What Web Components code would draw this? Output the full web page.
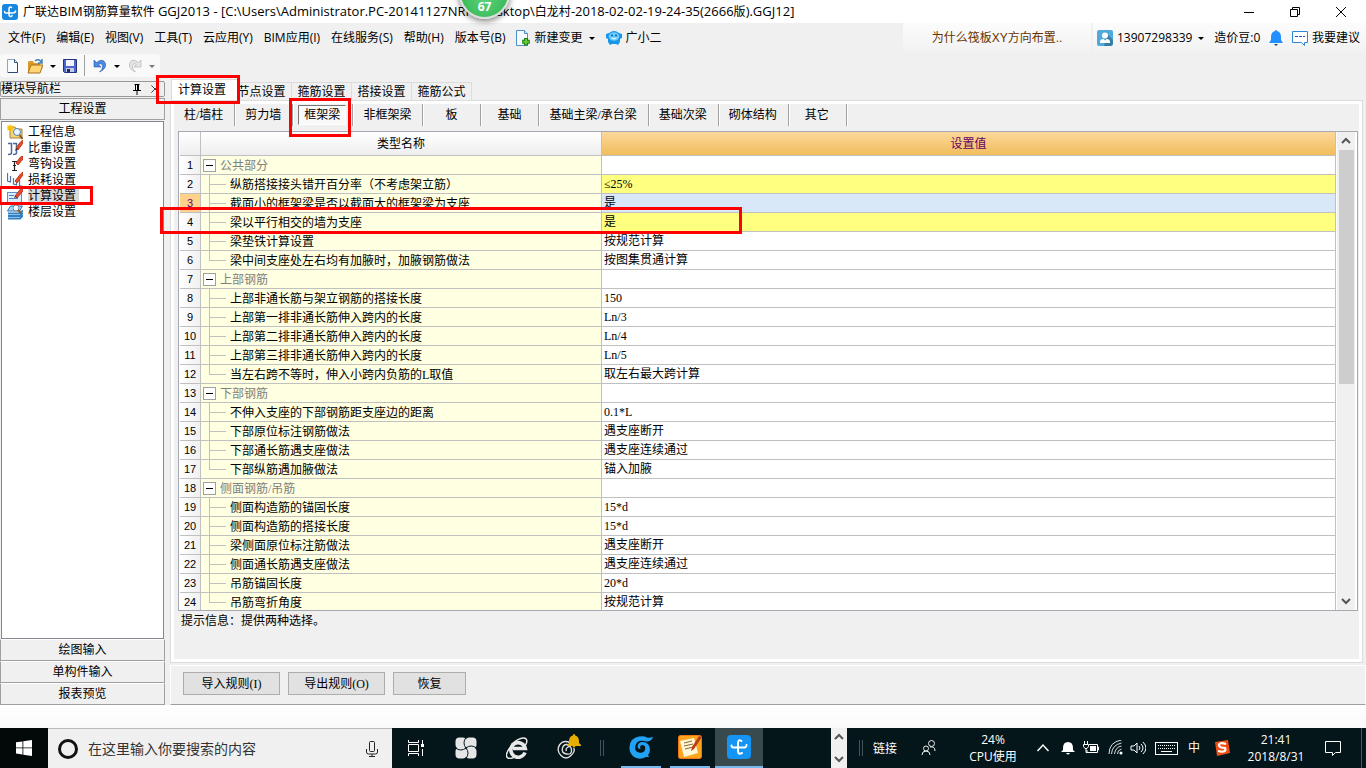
<!DOCTYPE html>
<html lang="zh-CN">
<head>
<meta charset="utf-8">
<title>广联达BIM钢筋算量软件 GGJ2013</title>
<style>
html,body{margin:0;height:100%;background:#f0f0f0}
body{font:12px/16px "Liberation Serif","Noto Sans CJK SC",serif;color:#000;overflow:hidden;
--ui:"Open Sans","Noto Sans CJK SC",sans-serif}
</style>
</head>
<body>
<budget-app></budget-app>
<script>
const ICONS = {
logo:'<rect width="16" height="16" rx="3" fill="#1787e0"/><path d="M9.500 3.500c-2-1-2.500 0-2.500 2v5c0 2.500 2.500 2.500 3 1M2.500 7.500c0 2 1.500 1.500 3 1.500h5c2.500 0 3-.5 3-2" fill="none" stroke="#fff" stroke-width="1.500" stroke-linecap="round"/>',
min:'<path d="M3 8.500h10" stroke="#000"/>',
restore:'<path d="M3.500 5.500h7v7h-7zM5.500 5.500v-2h7v7h-2" fill="none" stroke="#000"/>',
close:'<path d="M3 3l10 10M13 3L3 13" stroke="#000" fill="none"/>',
caret:'<path d="M5 7h6L8 10z" fill="#000"/>',
caretoff:'<path d="M5 7h6L8 10z" fill="#777"/>',
change:'<path d="M1.500 .5h8l3 3v12h-11z" fill="#f4faff" stroke="#4d8fc8"/><path d="M9.500 .5v3h3" fill="#cfe5f7" stroke="#4d8fc8"/><path d="M11 8v7.500M7.200 11.700h7.600" stroke="#217d12" stroke-width="4"/><path d="M11 9v5.500M8.200 11.700h5.600" stroke="#61c93a" stroke-width="2"/>',
xiaoer:'<path d="M3 3Q8-1 13 3l3 1v4l-2 1v3l-2 3-2-1H6l-2 1-2-3V9L0 8V4z" fill="#1996e8"/><ellipse cx="8" cy="6.500" rx="5.300" ry="4.200" fill="#69cbff"/><circle cx="6" cy="5.500" r="1" fill="#075ca5"/><circle cx="10" cy="5.500" r="1" fill="#075ca5"/><path d="M5.500 8q2.500 2 5 0" fill="none" stroke="#fff"/>',
user:'<rect width="16" height="16" rx="2" fill="#4fa9da"/><path d="M10 4l6 6v4l-2 2H7z" fill="#397da5"/><circle cx="8" cy="5.500" r="3" fill="#fff"/><path d="M3 12q0-3 3.500-3L8 10.500 9.500 9q3.500 0 3.500 3v1H3z" fill="#fff"/>',
bell:'<path d="M8 0q1 0 1 1 4 1 4 6v3l1.500 2v1h-13v-1L3 10V7q0-5 4-6 0-1 1-1z" fill="#2090ff"/><path d="M6 14h4l-2 2z" fill="#1c3f75"/>',
chat:'<path d="M.5 1.500h15v11h-3v3l-3-3h-9z" fill="#fff" stroke="#2f87dc"/><path d="M3 6.500h10" stroke="#1d55c5" stroke-dasharray="3 1"/>',
newf:'<path d="M2.500 1.500h7l3 3v10h-10z" fill="#f9fcff" stroke="#8fa5c0"/><path d="M9.500 1.500v3h3M12.500 5v9.500h-9.500" fill="none" stroke="#2d4a75"/>',
open:'<path d="M1 4l1-1h4l1 2h6v10H1z" fill="#d99b29"/><path d="M4 7h12l-3 8H1z" fill="#ffd574" stroke="#a86f1c"/><path d="M8 3q4-3 6 1m1-3v4h-4" fill="none" stroke="#3d81b4" stroke-width="1.500"/>',
save:'<path d="M1.500 1.500h13v13h-12l-1-1z" fill="#4e64cf" stroke="#25337c"/><path d="M4 2h8v6H4z" fill="#f1f4ff"/><path d="M4 10h8v4H4z" fill="#c4cbe1"/><path d="M5 11h3v3H5z" fill="#202b65"/>',
undo:'<path d="M2 2v7h7L6.500 6.500Q10 4.500 10.500 8t-3 6q7-3 6-8.500Q11-.5 4.500 4.500z" fill="#4a8ae0" stroke="#2758ad" stroke-width=".6"/>',
redo:'<path d="M14 2v7H7l2.500-2.500Q6 4.500 5.500 8t3 6q-7-3-6-8.500Q5-.5 11.500 4.500z" fill="#e4e4e4" stroke="#bbb" stroke-width=".8"/>',
pin:'<path d="M5.500 3.500h5M6.500 4v5M9.500 4v5M4 9.500h8M8 10v4M8.500 4v5" stroke="#000" fill="none"/>',
info:'<path d="M3 3h5l1 2h6v9H3z" fill="#f3d27c" stroke="#a98435"/><path d="M3 0l1 2 2-1-1 2 2 1-2 1 1 2-2-1-1 2-1-2-2 1 1-2-2-1 2-1L0 1l2 1z" fill="#ffc000"/><circle cx="10" cy="8" r="3.500" fill="#e9f6ff" stroke="#5684b6"/><path d="M12.500 11l3 4" stroke="#8a592c" stroke-width="2"/>',
weight:'<path d="M1 3.500h3.500V13q0 1.500-3.500 1.500M6 3.500h3.500V13q0 1.500-3.500 1.500" fill="none" stroke="#4c6a9c" stroke-width="1.500"/><path d="M9 8l4.500-6L16 0v3l-5 7z" fill="#ea4a2c" stroke="#b93c25"/><path d="M8 11l1-3 2 1z" fill="#333"/>',
hook:'<path d="M5 5.500h5M7.500 6v8M5 14.500h5M6 9.500h3" fill="none" stroke="#222" stroke-width="1.200"/><path d="M9 7l4.500-6L16 0v3l-5 6z" fill="#ea4a2c" stroke="#b93c25"/>',
loss:'<path d="M.5 1v8l3 1V4M6.500 6v6l3 1V9M12.500 8v6h3" fill="none" stroke="#4b73a7" stroke-width="1.200"/><path d="M8 9l5.500-7L16 0v3l-6 8z" fill="#ea4a2c" stroke="#b93c25"/>',
calc:'<rect x=".5" y="4.500" width="14" height="10" fill="#dcecff" stroke="#5d8ec6"/><path d="M2 7.500h5M2 10.500h9" stroke="#5283b9"/><path d="M8 8l5.500-7L16 0v3l-6 7z" fill="#ea4a2c" stroke="#b93c25"/><path d="M7 10l1-2 2 1z" fill="#333"/>',
floor:'<path d="M.5 7l3-5h12l-3 5z" fill="#a9d8f8" stroke="#2b75b7"/><path d="M1 9.500h12l3-3M1 12h12l3-3M1 14.500h12l3-3" fill="none" stroke="#2f80c2" stroke-width="1.800"/><circle cx="9" cy="4" r="3" fill="#edf8ff" stroke="#7b8796"/><path d="M11 6l3 3" stroke="#8a592c" stroke-width="2"/>',
up:'<path d="M4 10l4-4 4 4" fill="none" stroke="#555" stroke-width="2"/>',
down:'<path d="M4 6l4 4 4-4" fill="none" stroke="#555" stroke-width="2"/>',
win:'<path d="M0 2.300l6.500-.9v6.100H0zM7.300 1.300L16 0v7.500H7.300zM0 8.300h6.500v6.200L0 13.600zM7.300 8.300H16V16l-8.700-1.300z" fill="#fff"/>',
mic:'<rect x="5.500" y=".5" width="5" height="10" rx="1" fill="none" stroke="#222"/><path d="M2.500 8v3q0 2 2 2h7q2 0 2-2V8M8 13v2.500M5 15.500h6" fill="none" stroke="#222"/>',
task:'<path d="M.5 0v2.500h10V0M.5 16v-2.500h10V16M.5 4.500h10v7H.5zM14.500 0v4M14.500 9v7" fill="none" stroke="#fff"/><path d="M13 4h3v3h-3z" fill="#fff"/>',
pinwheel:'<rect width="11" height="11" x=".5" y=".5" rx="4" fill="#e6e6e6"/><rect width="11" height="11" x="10.500" y=".5" rx="4" fill="#e6e6e6"/><rect width="11" height="11" x=".5" y="10.500" rx="4" fill="#e6e6e6"/><rect width="11" height="11" x="10.500" y="10.500" rx="4" fill="#e6e6e6"/><path d="M11 11Q7 6 11 .5M11 11q5-4 10.500 0M11 11q4 5 0 10.500M11 11q-5 4-10.500 0" fill="none" stroke="#04161a"/>',
ie:'<path d="M19 15.500A7.300 7.300 0 1 1 19.300 11.500H7" fill="none" stroke="#e8e8e8" stroke-width="3.600"/><path d="M5.500 7.500Q14-.5 19 1.200q3.500 1.500 .5 7M4 10.500Q-2 19 2 21q4 1.500 9-2.500" fill="none" stroke="#e8e8e8" stroke-width="1.500"/>',
gbell:'<path d="M16 8.500Q9 5.500 5.500 11T7 21.500t10 0T19.500 14M15.500 11Q10 9 8.500 14t4 6 5-4-3.500-3-1.500 4" fill="none" stroke="#dedede" stroke-width="1.400"/><path d="M20 0q1.200 0 1.200 1.500 3.800 1 3.800 6V9l2 2v1H13v-1l2-2V7.500q0-5 3.800-6Q18.800 0 20 0zM18.500 12h3l-1.500 2z" fill="#e5ae00"/>',
gblue:'<path d="M24 1.500q-1 4.500-5.500 5-1.500 0-3-.5Q8 4.500 6.500 10.500t3.500 7q5 1 6-3t-2.500-4.500q-2.500 0-2.500 2.500 0 1 1 1.500-3 .5-3.500-2.500Q9 6.500 14.500 7q6 1 6.500 7 0 4-2 6l1 2-3 0q-6 3-11 .5Q0 19 .5 12 1 3 10 1.500q5-1 8 1 3 1 6-1z" fill="#22a2f5"/>',
note:'<rect x=".5" y=".5" width="23" height="23" rx="2" fill="#ffa51d" stroke="#f37815"/><path d="M2 6l14-3 4 15-14 4z" fill="#fff8d7"/><path d="M6 8l8-2M6 11l9-2M7 14l8-2" stroke="#8e6231"/><path d="M13 16l1-4 7-11 3 1-8 12z" fill="#ba3c1b"/>',
cad:'<rect width="24" height="24" rx="4" fill="#1495f5"/><path d="M14.500 6q-3.500-2-3.500 2v8q0 4 4 2M4.500 10.500q0 2.500 3 2h8q4 .5 4-2.500" fill="none" stroke="#fff" stroke-width="2" stroke-linecap="round"/>',
people:'<circle cx="10.500" cy="3.500" r="3" fill="none" stroke="#eee"/><circle cx="5" cy="8.500" r="2.500" fill="none" stroke="#eee"/><path d="M1 15q0-4 4-4t4 4M9 7q5-1 5 4" fill="none" stroke="#eee"/>',
chev:'<path d="M2.500 11L8 5l5.500 6" fill="none" stroke="#fff" stroke-width="1.500"/>',
tbell:'<path d="M8 2q5 0 5 6v2l2 2H1l2-2V8q0-6 5-6zM6 13h4q-2 3-4 0z" fill="#fff"/>',
battery:'<path d="M6 4.500h8.500v8H4V10M14.500 7h1v3h-1M1.500 1v3M4.500 1v3M.5 4.500h5v2L4 8.500H2L.5 6.500zM3 8v4.500h2" fill="none" stroke="#fff"/><path d="M7 6h6v5H7z" fill="#fff"/>',
wifi:'<circle cx="13" cy="13" r="1.500" fill="#fff"/><path d="M9.500 14q0-4 4-5M6.500 14q1-7 7-8M3.500 14Q4 5 13.500 3M1 14Q1 2 13.500 0" fill="none" stroke="#ddd"/>',
sound:'<path d="M1 6h3l3-3v10l-3-3H1zM9 6q2 2 0 4M11 4q4 4 0 8M13 2q6 6 0 12" fill="none" stroke="#fff"/>',
keyb:'<rect x=".5" y=".5" width="22" height="12" fill="none" stroke="#fff"/><path d="M3 3.500h17M3 6.500h17" stroke="#fff" stroke-dasharray="1 1"/><path d="M6 9.500h11" stroke="#fff"/>',
sogou:'<path d="M1 2l13-2 2 13-13 3z" fill="#f04e13"/><path d="M12 4q-7-2-7 1t6 3q2 5-7 3" fill="none" stroke="#fff" stroke-width="2.200"/>',
notify:'<path d="M.5 1.500h15v11h-5l-3 3v-3h-7z" fill="none" stroke="#fff"/>'
};
/* Base class: puts the template of the subclass into an open shadow root. */
class Base extends HTMLElement{
  constructor(){super();const t=document.createElement('template');t.innerHTML='<style>*{box-sizing:border-box}:host{display:block;box-sizing:border-box}button{font:inherit;color:inherit;margin:0;padding:0;border:0;background:none;display:flex;align-items:center;justify-content:center;white-space:nowrap}a{color:inherit;text-decoration:none}</style>'+this.view();this.attachShadow({mode:'open'}).append(t.content.cloneNode(true))}
  view(){return '<slot></slot>'}
}
const def=(n,view)=>customElements.define(n,class extends Base{view(){return view.call(this)}});

def('ui-icon',function(){
  const n=this.getAttribute('name'),w=+this.getAttribute('w')||16,h=+this.getAttribute('h')||w,v=this.getAttribute('box')||`0 0 ${w} ${h}`;
  return `<style>:host{flex:none;width:${w}px;height:${h}px}svg{display:block}</style><svg width="${w}" height="${h}" viewBox="${v}" aria-hidden="true">${ICONS[n]||''}</svg>`});
const ic=(n,w=16,h=w,box='')=>`<ui-icon name="${n}" w="${w}" h="${h}" ${box?`box="${box}"`:''}></ui-icon>`;

def('title-bar',()=>`<style>:host{display:flex;align-items:center;height:23px;background:#fff;font-family:var(--ui);padding-left:2px;flex:none}
.t{flex:1;margin-left:5px;white-space:nowrap;overflow:hidden}::slotted(span){font-size:13px}button{width:46px;height:22px}button:last-child{margin-right:2px}</style>
${ic('logo')}<span class="t"><slot></slot></span><button aria-label="最小化">${ic('min')}</button><button aria-label="还原">${ic('restore')}</button><button aria-label="关闭">${ic('close')}</button>`);

def('menu-bar',()=>`<style>:host{display:flex;height:29px;font-family:var(--ui);flex:none}
nav{display:flex;align-items:center;gap:11px;padding-left:8px;flex:1}button{gap:4px}
nav .x{margin-left:-2px}
.news{width:188px;font-family:"Liberation Sans","Noto Sans CJK SC",sans-serif;color:#630;display:flex;align-items:center;justify-content:center}
.news,.acct{background:linear-gradient(#fcfcfc,#f2f2f2)}
.acct{display:flex;align-items:center;width:273px;padding:0 6px 0 4px;margin-left:2px;justify-content:space-between}</style>
<nav>${['文件(F)','编辑(E)','视图(V)','工具(T)','云应用(Y)','BIM应用(I)','在线服务(S)','帮助(H)','版本号(B)'].map(x=>`<button>${x}</button>`).join('')}
<button class="x">${ic('change')}新建变更 ${ic('caret',10,16,'3 0 10 16')}</button><button class="x">${ic('xiaoer')}广小二</button></nav>
<a class="news" href="#">为什么筏板XY方向布置..</a>
<div class="acct"><button>${ic('user')}13907298339 ${ic('caret',10,16,'3 0 10 16')}</button><span>造价豆:0</span><button aria-label="消息">${ic('bell')}</button><button>${ic('chat')}我要建议</button></div>`);

def('tool-bar',()=>`<style>:host{height:27px;padding-top:2px;flex:none}div{display:flex;align-items:center;width:160px;height:23px;background:#f9f9f9;border-radius:3px;padding-left:4px}
button{width:18px;height:22px}.n{margin-right:5px}.a{width:17px}i{height:21px;border-left:1px solid #a0a0a0;margin:0 6px}</style><div role="toolbar">
<button class="n" aria-label="新建">${ic('newf')}</button><button aria-label="打开">${ic('open')}</button><button class="a" aria-label="打开菜单">${ic('caret')}</button><button aria-label="保存">${ic('save')}</button><i></i><button aria-label="撤销">${ic('undo')}</button><button class="a" aria-label="撤销列表">${ic('caret')}</button><button aria-label="恢复">${ic('redo')}</button><button class="a" aria-label="恢复列表">${ic('caretoff')}</button></div>`);

def('side-nav',()=>`<style>:host{display:flex;flex-direction:column;width:165px;flex:none}
header{display:flex;height:16px;border:1px solid #999;border-radius:2px;margin:2px 0 1px;align-items:center;overflow:hidden}header span{flex:1}
header button{width:18px}.sec{height:22px;width:100%;border:1px solid #a0a0a0;border-top-color:#fff;background:#f0f0f0}
.sec.top{border-top-color:#a0a0a0}
ul{list-style:none;margin:1px 1px 0;padding:2px 0 0 5px;flex:1;background:#fff;border:1px solid #828790}
li a{display:flex;align-items:center;height:16px;gap:5px}li a span{padding-right:3px}.on span{background:#d9d9d9}</style>
<header><span>模块导航栏</span><button aria-label="固定">${ic('pin')}</button><button aria-label="关闭">${ic('close',16,16,'-1 -3 18 22')}</button></header>
<button class="sec top">工程设置</button>
<ul>${[['info','工程信息'],['weight','比重设置'],['hook','弯钩设置'],['loss','损耗设置'],['calc','计算设置'],['floor','楼层设置']].map(([i,t])=>`<li><a href="#" class="${i=='calc'?'on':''}">${ic(i)}<span>${t}</span></a></li>`).join('')}</ul>
<button class="sec">绘图输入</button><button class="sec">单构件输入</button><button class="sec">报表预览</button>`);

def('tab-strip',()=>`<style>:host{display:flex;align-items:flex-end;height:21px;padding-left:1px;flex:none}
button{width:60px;height:18px;border:1px solid #dcdcdc;border-width:1px 1px 0 0}
.on{width:68px;height:21px;margin-right:-7px;background:#fff;border-left-width:1px;justify-content:flex-start;padding-left:6px;position:relative;z-index:1}</style>
${['计算设置','节点设置','箍筋设置','搭接设置','箍筋公式'].map((t,i)=>`<button role="tab" class="${i?'':'on'}">${t}</button>`).join('')}`);

def('member-tabs',()=>`<style>:host{display:flex;height:27px;align-items:flex-start;flex:none}
button{min-width:58px;height:22px;padding:0 11px 0 10px;border-right:1px solid #a0a0a0;box-shadow:1px 0 #fff}
button:first-child{padding:0 13px 0 8px}
.on span{border:1px solid #888;border-color:#777 #fff #fff #777;background:#f9f9f9;padding:1px 5px;margin:0 -5px}</style>
${['柱/墙柱','剪力墙','框架梁','非框架梁','板','基础','基础主梁/承台梁','基础次梁','砌体结构','其它'].map((t,i)=>`<button class="${i==2?'on':''}"><span>${t}</span></button>`).join('')}`);

const ROWS=[['公共部分'],['纵筋搭接接头错开百分率（不考虑架立筋）','≤25%','y'],['截面小的框架梁是否以截面大的框架梁为支座','是','b'],['梁以平行相交的墙为支座','是','y'],['梁垫铁计算设置','按规范计算'],['梁中间支座处左右均有加腋时，加腋钢筋做法','按图集贯通计算'],
['上部钢筋'],['上部非通长筋与架立钢筋的搭接长度','150'],['上部第一排非通长筋伸入跨内的长度','Ln/3'],['上部第二排非通长筋伸入跨内的长度','Ln/4'],['上部第三排非通长筋伸入跨内的长度','Ln/5'],['当左右跨不等时，伸入小跨内负筋的L取值','取左右最大跨计算'],
['下部钢筋'],['不伸入支座的下部钢筋距支座边的距离','0.1*L'],['下部原位标注钢筋做法','遇支座断开'],['下部通长筋遇支座做法','遇支座连续通过'],['下部纵筋遇加腋做法','锚入加腋'],
['侧面钢筋/吊筋'],['侧面构造筋的锚固长度','15*d'],['侧面构造筋的搭接长度','15*d'],['梁侧面原位标注筋做法','遇支座断开'],['侧面通长筋遇支座做法','遇支座连续通过'],['吊筋锚固长度','20*d'],['吊筋弯折角度','按规范计算']];
def('rule-table',()=>`<style>:host{display:flex;flex:1;min-height:0;border:1px solid #a5a9b2;background:#fff;padding:0 2px 0 1px}
.v{flex:1;overflow:hidden}table{border-collapse:separate;border-spacing:0;table-layout:fixed;width:100%}
th,td{padding:0;border:solid #c0c0c0;border-width:0 1px 1px 0;height:19px;line-height:18px;font-weight:400;text-align:left;white-space:nowrap;overflow:hidden}
thead th{height:24px;text-align:center;background:linear-gradient(#fff,#eee)}thead th.s{background:linear-gradient(#fbd89b,#f1bd5c);color:#606}
tbody th{text-align:center;font:11px/18px "Liberation Sans",sans-serif;background:linear-gradient(90deg,#fff,#f0f0f0)}tr.b th{background:#ffd28b;color:#606}
.n{background:#ffffe1}.n div{display:flex;height:18px;align-items:center}.n div span:last-child{padding-top:2px;line-height:16px}.g{color:#808080}
.g button{width:13px;height:13px;border:1px solid #a0a0a0;background:#fff;margin:0 4px 0 2px}.g button::before{content:"";width:7px;height:1px;background:#000}
.tree{width:17px;height:19px;margin:0 4px 0 8px;background:linear-gradient(#c0c0c0,#c0c0c0) 0 0/1px 100% no-repeat,linear-gradient(#c0c0c0,#c0c0c0) 0 9px/17px 1px no-repeat}
.last .tree{background-size:1px 10px,17px 1px}tbody td:last-child{padding:1px 0 0 2px;line-height:17px}.y td:last-child{background:#ffff80}.b td:last-child{background:#d8e8f8}
aside{width:18px;margin-left:1px;background:#f0f0f0;display:flex;flex-direction:column;align-items:center}aside button{height:18px;width:16px}aside i{width:15px;height:234px;background:#cdcdcd}aside s{flex:1}</style>
<div class="v"><table><colgroup><col style="width:21px"><col style="width:401px"><col></colgroup><thead><tr><th></th><th>类型名称</th><th class="s">设置值</th></tr></thead><tbody>
${ROWS.map((r,i)=>{const g=r.length==1,last=!ROWS[i+1]||ROWS[i+1].length==1;return `<tr class="${r[2]||''}"><th>${i+1}</th><td class="n"><div class="${g?'g':last?'last':''}">${g?'<button aria-label="折叠"></button>':'<span class="tree"></span>'}<span>${r[0]}</span></div></td><td>${r[1]||''}</td></tr>`}).join('')}
</tbody></table></div><aside><button aria-label="向上">${ic('up')}</button><i></i><s></s><button aria-label="向下">${ic('down')}</button></aside>`);

def('rule-actions',()=>`<style>:host{display:flex;gap:8px;height:40px;padding:6px 12px 0;border:1px solid #fff;border-bottom-color:#a0a0a0;margin-top:2px;flex:none}
button{width:97px;height:23px;background:#e1e1e1;border:1px solid #adadad}button.s{width:73px}</style><button>导入规则(I)</button><button>导出规则(O)</button><button class="s">恢复</button>`);

def('task-bar',()=>`<style>:host{display:flex;height:40px;background:#04161a;color:#fff;font-family:var(--ui);flex:none}
button{height:40px;width:49px;flex:none}.start{width:48px;background:#030809}
.search{display:flex;align-items:center;width:344px;background:#f0f0f0;border-top:1px solid #bbb;padding:0 12px 0 10px;color:#333;flex:none}
.ring{width:20px;height:20px;border:3px solid #111;border-radius:50%;margin-right:10px}
input{flex:1;min-width:0;border:0;background:none;font:14px/20px var(--ui);padding:0}input::placeholder{color:#333;opacity:1}
.q{display:flex}.q button{width:51px}.q button:first-child{width:48px}.grip{width:4px;height:16px;border:solid #45545a;border-width:0 1px;margin:12px 13px 0 7px;flex:none}
.run{display:flex}.run button{border-bottom:2px solid #76b9ed;width:40px;margin:0 5px 0 4px}.run button.on{width:48px;background:#394a4e;margin:0}
.sp{flex:1}.scr{width:16px;background:#f0f0f0;display:flex;flex-direction:column;justify-content:space-between;padding:1px 0;flex:none}
.g1{margin:12px 9px 0 12px}
.tray{display:flex;align-items:center}.tray button{width:24px}.txt{text-align:center;line-height:17px}.tray .k{width:32px}.edge{width:14px;height:40px;border-right:1px solid #555;margin-right:4px}</style>
<button class="start" aria-label="开始">${ic('win')}</button><div class="search"><span class="ring"></span><input aria-label="搜索" placeholder="在这里输入你要搜索的内容">${ic('mic')}</div>
<div class="q"><button aria-label="任务视图">${ic('task')}</button><button aria-label="风车">${ic('pinwheel',22)}</button><button aria-label="浏览器">${ic('ie',22)}</button><button aria-label="提醒">${ic('gbell',28)}</button></div><span class="grip"></span>
<div class="run"><button aria-label="浏览器窗口">${ic('gblue',24)}</button><button aria-label="便签">${ic('note',24)}</button><button class="on" aria-label="算量软件">${ic('cad',24)}</button></div><span class="sp"></span>
<div class="scr">${ic('up')}${ic('down')}</div><span class="grip g1"></span>
<div class="tray"><span class="txt" style="width:26px">链接</span><button style="width:62px" aria-label="人脉">${ic('people')}</button><span class="txt" style="width:66px">24%<br>CPU使用</span><button style="width:34px" aria-label="显示隐藏图标">${ic('chev')}</button><button style="width:16px" aria-label="通知铃">${ic('tbell')}</button><button style="width:30px" aria-label="电池">${ic('battery')}</button><button style="width:20px" aria-label="网络">${ic('wifi')}</button><button aria-label="音量">${ic('sound')}</button><button class="k" aria-label="键盘">${ic('keyb',23,13)}</button><button>中</button><button class="k" aria-label="输入法">${ic('sogou')}</button><span class="txt" style="width:76px">21:41<br>2018/8/31</span><button style="width:38px" aria-label="通知">${ic('notify')}</button><span class="edge" style="width:10px"></span></div>`);

def('mark-box',()=>`<style>:host{position:absolute;border:3px solid #f00;pointer-events:none;z-index:3}</style>`);
def('speed-ball',()=>`<style>:host{position:absolute;left:459px;top:-32px;width:51px;height:51px;border-radius:50%;border:2px solid #d9dfda;background:radial-gradient(circle at 50% 60%,#5ad477,#29aa49);box-shadow:0 2px 6px #0008;color:#fff;font:700 12px/16px "Open Sans",sans-serif;text-align:center;padding-top:29px;z-index:4}</style><slot></slot>`);

def('budget-app',()=>`<style>:host{display:flex;flex-direction:column;height:100vh;position:relative;overflow:hidden}
.work{display:flex;flex:1;min-height:0;gap:5px}main{flex:1;min-width:0;display:flex;flex-direction:column}
.page{flex:1;min-height:0;display:flex;flex-direction:column;border:1px solid #dcdcdc;box-shadow:inset 0 0 0 3px #fff;margin-right:3px;padding:3px 4px 3px 3px}
rule-table{margin:0 0 0 4px}.hint{margin:0;height:48px;padding:2px 7px;flex:none}.gap{height:23px;background:linear-gradient(#fff,#fafafa);flex:none}</style>
<title-bar>广联达<span>BIM</span>钢筋算量软件 <span>GGJ2013 - [C:\\Users\\Administrator.PC-20141127NRH\\Desktop\\</span>白龙村<span>-2018-02-02-19-24-35(2666</span>版<span>).GGJ12]</span></title-bar>
<menu-bar></menu-bar><tool-bar></tool-bar>
<div class="work"><side-nav></side-nav><main><tab-strip></tab-strip><section class="page"><member-tabs></member-tabs><rule-table></rule-table><p class="hint">提示信息：提供两种选择。</p></section><rule-actions></rule-actions></main></div>
<div class="gap"></div><task-bar></task-bar>
<mark-box style="left:156px;top:75px;width:84px;height:29px"></mark-box><mark-box style="left:289px;top:98px;width:62px;height:39px"></mark-box><mark-box style="left:-2px;top:186px;width:95px;height:19px"></mark-box><mark-box style="left:160px;top:207px;width:582px;height:27px"></mark-box>
<speed-ball>67</speed-ball>`);
</script>
</body>
</html>
